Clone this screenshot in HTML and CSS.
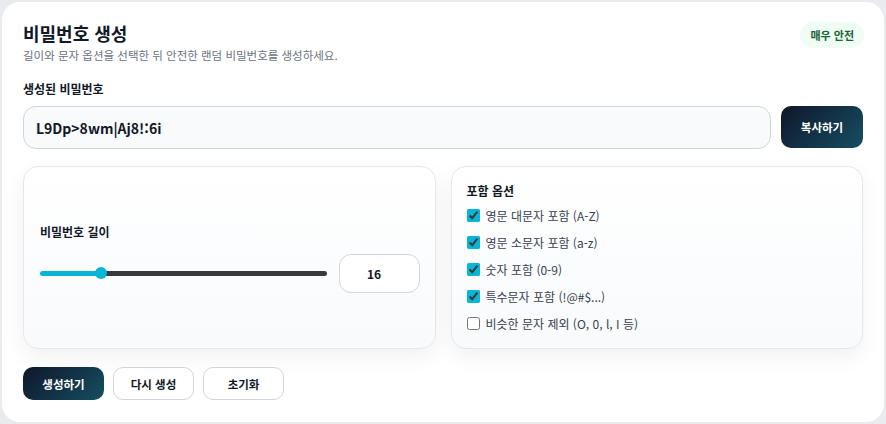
FILE: index.html
```html
<!DOCTYPE html>
<html lang="ko">
<head>
    <meta charset="UTF-8">
    <meta name="viewport" content="width=device-width, initial-scale=1.0">
    <title>비밀번호 생성</title>
    <link rel="stylesheet" href="styles.css">
</head>
<body>
    <div class="card">
        <div class="header">
            <div>
                <h1>비밀번호 생성</h1>
                <p class="subtitle">길이와 문자 옵션을 선택한 뒤 안전한 랜덤 비밀번호를 생성하세요.</p>
            </div>
            <span class="badge">매우 안전</span>
        </div>

        <div class="label">생성된 비밀번호</div>
        <div class="output-row">
            <input class="output" type="text" value="L9Dp>8wm|Aj8!:6i" readonly>
            <button class="btn btn-dark btn-copy">복사하기</button>
        </div>

        <div class="panels">
            <div class="panel panel-length">
                <div class="label">비밀번호 길이</div>
                <div class="length-row">
                    <input class="slider" type="range" min="4" max="64" value="16" style="--fill: 20%">
                    <input class="length-box" type="text" value="16">
                </div>
            </div>

            <div class="panel panel-options">
                <div class="label">포함 옵션</div>
                <label class="option"><input type="checkbox" checked> 영문 대문자 포함 (A-Z)</label>
                <label class="option"><input type="checkbox" checked> 영문 소문자 포함 (a-z)</label>
                <label class="option"><input type="checkbox" checked> 숫자 포함 (0-9)</label>
                <label class="option"><input type="checkbox" checked> 특수문자 포함 (!@#$...)</label>
                <label class="option"><input type="checkbox"> 비슷한 문자 제외 (O, 0, l, I 등)</label>
            </div>
        </div>

        <div class="actions">
            <button class="btn btn-dark">생성하기</button>
            <button class="btn btn-light">다시 생성</button>
            <button class="btn btn-light">초기화</button>
        </div>
    </div>
</body>
</html>
```

FILE: styles.css
```css
body {
    margin: 0;
    padding: 2px;
    background: #e9ebef;
    font-family: "Noto Sans CJK KR", "Noto Sans", sans-serif;
    color: #111827;
}
.card {
    background: #fff;
    border-radius: 18px;
    padding: 19px 21px 22px;
    height: 420px;
    box-sizing: border-box;
}
.header {
    display: flex;
    justify-content: space-between;
    align-items: flex-start;
}
h1 {
    margin: 0;
    font-size: 18px;
    line-height: 24px;
    font-weight: 700;
}
.subtitle {
    margin: 1px 0 0;
    font-size: 11.5px;
    line-height: 18px;
    color: #6b7280;
}
.badge {
    margin-top: 1px;
    margin-right: -1px;
    background: #f0fdf4;
    color: #166534;
    font-size: 11px;
    font-weight: 700;
    line-height: 26px;
    padding: 0 10px;
    border-radius: 13px;
}
.label {
    font-size: 12px;
    line-height: 18px;
    font-weight: 700;
}
.header + .label {
    margin-top: 16px;
}
.output-row {
    display: flex;
    gap: 10px;
    margin-top: 8px;
}
.output {
    flex: 1;
    height: 43px;
    box-sizing: border-box;
    border: 1px solid #d1d5db;
    border-radius: 13px;
    background: #f8fafc;
    padding: 0 12px;
    font-family: inherit;
    font-size: 14px;
    font-weight: 700;
    color: #111827;
}
.btn {
    font-family: inherit;
    font-size: 11.5px;
    font-weight: 700;
    border-radius: 10px;
    width: 81px;
    height: 33px;
    cursor: pointer;
}
.btn-dark {
    background: linear-gradient(135deg, #0f172a, #164e63);
    color: #fff;
    border: none;
}
.btn-light {
    background: #fff;
    color: #111827;
    border: 1px solid #d1d5db;
}
.btn-copy {
    width: 82px;
    height: 42px;
}
.panels {
    display: grid;
    grid-template-columns: 1fr 1fr;
    gap: 15px;
    margin-top: 17px;
}
.panel {
    height: 183px;
    box-sizing: border-box;
    border: 1px solid #e5e7eb;
    border-radius: 15px;
    background: linear-gradient(180deg, #fff, #f8fafc);
    box-shadow: 0 8px 22px rgba(15, 23, 42, 0.06);
    display: flex;
    flex-direction: column;
    justify-content: center;
}
.panel-length {
    padding: 0 15px 0 16px;
}
.panel-length .label {
    margin-bottom: 13px;
}
.length-row {
    display: flex;
    align-items: center;
    gap: 12px;
}
.slider {
    flex: 1;
    margin: 0;
    height: 12px;
    -webkit-appearance: none;
    appearance: none;
    background: transparent;
}
.slider::-webkit-slider-runnable-track {
    height: 5px;
    border-radius: 3px;
    background: linear-gradient(90deg, #06b6d4 var(--fill), #3a3a3c var(--fill));
}
.slider::-webkit-slider-thumb {
    -webkit-appearance: none;
    width: 12px;
    height: 12px;
    margin-top: -3.5px;
    border-radius: 50%;
    background: #06b6d4;
}
.length-box {
    width: 81px;
    height: 39px;
    box-sizing: border-box;
    border: 1px solid #d1d5db;
    border-radius: 12px;
    background: #fff;
    text-align: center;
    padding: 0 10px 0 0;
    font-family: inherit;
    font-size: 12px;
    font-weight: 700;
    color: #111827;
}
.panel-options {
    padding: 0 16px 0 15px;
    gap: 8px;
}
.panel-options .label {
    margin-bottom: -2px;
}
.option {
    display: flex;
    align-items: center;
    gap: 6px;
    font-size: 12px;
    line-height: 19px;
    color: #374151;
}
.option input {
    margin: 0;
    width: 13px;
    height: 13px;
    accent-color: #06b6d4;
}
.actions {
    display: flex;
    gap: 9px;
    margin-top: 18px;
}
```
